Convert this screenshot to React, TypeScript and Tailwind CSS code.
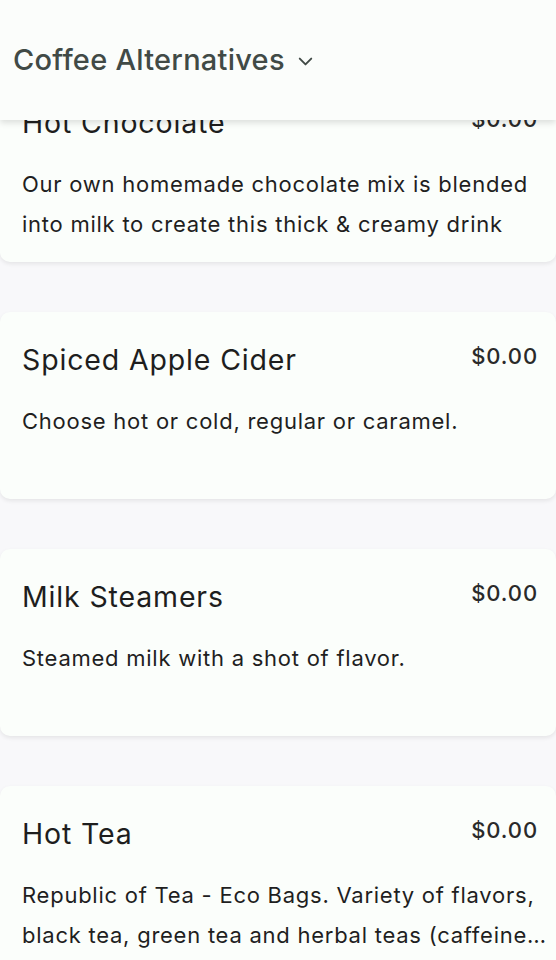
import { ChevronDown } from "lucide-react";

const items = [
  {
    name: "Hot Chocolate",
    price: "$0.00",
    desc: "Our own homemade chocolate mix is blended into milk to create this thick & creamy drink",
  },
  {
    name: "Spiced Apple Cider",
    price: "$0.00",
    desc: "Choose hot or cold, regular or caramel.",
  },
  {
    name: "Milk Steamers",
    price: "$0.00",
    desc: "Steamed milk with a shot of flavor.",
  },
  {
    name: "Hot Tea",
    price: "$0.00",
    desc: "Republic of Tea - Eco Bags. Variety of flavors, black tea, green tea and herbal teas (caffeine free) available.",
  },
];

export default function App() {
  return (
    <div
      className="h-[960px] overflow-hidden bg-[#f8f8fa]"
      style={{ fontFamily: "Inter, Roboto, sans-serif" }}
    >
      {/* Header */}
      <div className="relative z-10 h-[120px] bg-[#fbfdfb] shadow-[0_3px_6px_rgba(0,0,0,0.12)] flex items-center pl-[13px]">
        <h1 className="text-[29px] font-medium text-[#414a46] tracking-[0.25px]">
          Coffee Alternatives
        </h1>
        <ChevronDown size={23} strokeWidth={2} className="ml-[9px] mt-[2px] text-[#414a46]" />
      </div>

      {/* Menu list */}
      <div className="-mt-[45px] flex flex-col gap-[50px]">
        {items.map((item) => (
          <div
            key={item.name}
            className="h-[187px] shrink-0 bg-[#fbfefb] rounded-[10px] shadow-[0_2px_4px_rgba(0,0,0,0.08)] pt-[30px] pl-[22px] pr-[3px]"
          >
            <div className="flex flex-row items-start justify-between h-9 mr-[15px]">
              <div className="text-[28.5px] leading-9 tracking-[0.85px] text-[#1e1e1e]">{item.name}</div>
              <div className="text-[22px] leading-7 font-medium tracking-[0.9px] text-[#2a2a2a]">{item.price}</div>
            </div>
            <p className="mt-[23px] text-[22px] leading-10 tracking-[0.75px] text-[#1f1f1f] line-clamp-2">
              {item.desc}
            </p>
          </div>
        ))}
      </div>
    </div>
  );
}
